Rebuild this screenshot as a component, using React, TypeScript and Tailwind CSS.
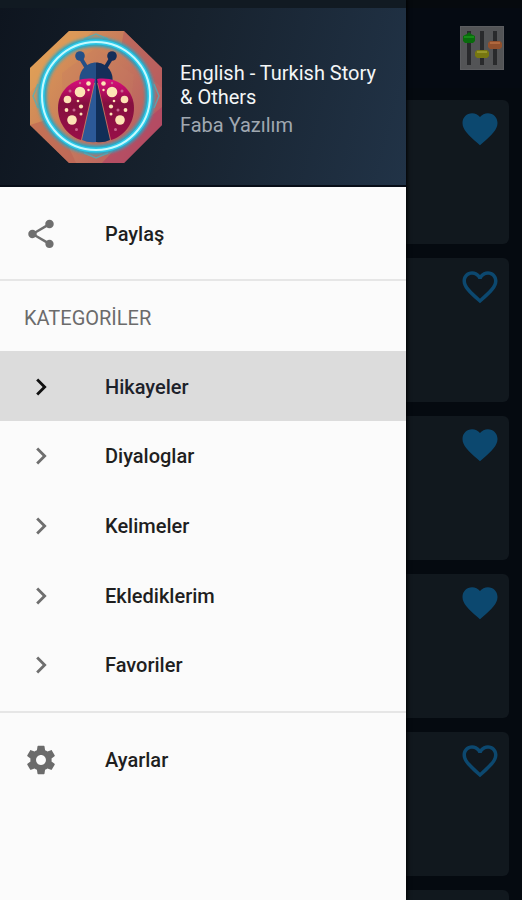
import type { ReactNode } from "react";

const HEART =
  "M12 21.35l-1.45-1.32C5.4 15.36 2 12.28 2 8.5 2 5.42 4.42 3 7.5 3c1.74 0 3.41.81 4.5 2.09C13.09 3.81 14.76 3 16.5 3 19.58 3 22 5.42 22 8.5c0 3.78-3.4 6.86-8.55 11.54L12 21.35z";
const HEART_OUTLINE =
  "M16.5 3c-1.74 0-3.41.81-4.5 2.09C10.91 3.81 9.24 3 7.5 3 4.42 3 2 5.42 2 8.5c0 3.78 3.4 6.86 8.55 11.54L12 21.35l1.45-1.32C18.6 15.36 22 12.28 22 8.5 22 5.42 19.58 3 16.5 3zm-4.4 15.55l-.1.1-.1-.1C7.14 14.24 4 11.39 4 8.5 4 6.5 5.5 5 7.5 5c1.54 0 3.04.99 3.57 2.36h1.87C13.46 5.99 14.96 5 16.5 5c2 0 3.5 1.5 3.5 3.5 0 2.89-3.14 5.74-7.9 10.05z";
const SHARE =
  "M18 16.08c-.76 0-1.44.3-1.96.77L8.91 12.7c.05-.23.09-.46.09-.7s-.04-.47-.09-.7l7.05-4.11c.54.5 1.25.81 2.04.81 1.66 0 3-1.34 3-3s-1.34-3-3-3-3 1.34-3 3c0 .24.04.47.09.7L8.04 9.81C7.5 9.31 6.79 9 6 9c-1.66 0-3 1.34-3 3s1.34 3 3 3c.79 0 1.5-.31 2.04-.81l7.12 4.16c-.05.21-.08.43-.08.65 0 1.61 1.31 2.92 2.92 2.92s2.92-1.31 2.92-2.92-1.31-2.92-2.92-2.92z";
const CHEVRON = "M10 6L8.59 7.41 13.17 12l-4.58 4.59L10 18l6-6z";
const GEAR =
  "M19.43 12.98c.04-.32.07-.64.07-.98s-.03-.66-.07-.98l2.11-1.65c.19-.15.24-.42.12-.64l-2-3.46c-.12-.22-.39-.3-.61-.22l-2.49 1c-.52-.4-1.08-.73-1.69-.98l-.38-2.65C14.46 2.18 14.25 2 14 2h-4c-.25 0-.46.18-.49.42l-.38 2.65c-.61.25-1.17.59-1.69.98l-2.49-1c-.23-.09-.49 0-.61.22l-2 3.46c-.13.22-.07.49.12.64l2.11 1.65c-.04.32-.07.65-.07.98s.03.66.07.98l-2.11 1.65c-.19.15-.24.42-.12.64l2 3.46c.12.22.39.3.61.22l2.49-1c.52.4 1.08.73 1.69.98l.38 2.65c.03.24.24.42.49.42h4c.25 0 .46-.18.49-.42l.38-2.65c.61-.25 1.17-.59 1.69-.98l2.49 1c.23.09.49 0 .61-.22l2-3.46c.12-.22.07-.49-.12-.64l-2.11-1.65zM12 15.5c-1.93 0-3.5-1.57-3.5-3.5s1.57-3.5 3.5-3.5 3.5 1.57 3.5 3.5-1.57 3.5-3.5 3.5z";

const categories = ["Hikayeler", "Diyaloglar", "Kelimeler", "Eklediklerim", "Favoriler"];
const stories = [true, false, true, true, false, true];

function Glyph({ path, className }: { path: string; className: string }) {
  return (
    <svg viewBox="0 0 24 24" fill="currentColor" aria-hidden="true" className={className}>
      <path d={path} />
    </svg>
  );
}

function Spots() {
  return (
    <g fill="#fde3b5">
      <circle cx="54" cy="53" r="5.3" />
      <circle cx="41.500" cy="60.500" r="3.800" />
      <circle cx="46" cy="81" r="4.800" />
      <circle cx="62.500" cy="44.500" r="2.300" />
      <circle cx="55" cy="67.500" r="2.100" />
      <circle cx="40.500" cy="71" r="1.900" />
      <circle cx="55" cy="75" r="1.500" />
      <circle cx="52" cy="62" r="1.300" />
      <circle cx="62.500" cy="51" r="1.200" />
      <g fill="#c8668c">
        <circle cx="44" cy="52" r="1.500" />
        <circle cx="50.500" cy="90.500" r="1.500" />
        <circle cx="48" cy="71" r="1.500" />
        <circle cx="54" cy="44" r="1.200" />
      </g>
    </g>
  );
}

function LadybugLogo() {
  return (
    <svg viewBox="4 6 132 132" role="img" aria-label="Faba" className="size-33 shrink-0">
      <defs>
        <linearGradient id="plate" x1="0" y1="0.2" x2="1" y2="0.8">
          <stop offset="0" stopColor="#dc9a55" />
          <stop offset="0.5" stopColor="#c67a5c" />
          <stop offset="1" stopColor="#b65664" />
        </linearGradient>
        <linearGradient id="wing" x1="0" y1="0" x2="0" y2="1">
          <stop offset="0" stopColor="#d90f7d" />
          <stop offset="0.2" stopColor="#b80d62" />
          <stop offset="0.4" stopColor="#85103f" />
          <stop offset="1" stopColor="#980f48" />
        </linearGradient>
        <filter id="glow" x="-20%" y="-20%" width="140%" height="140%">
          <feGaussianBlur stdDeviation="1.500" />
        </filter>
      </defs>
      <path d="M43 6h55l38 37v57l-38 38H43L4 100V43z" fill="url(#plate)" />
      <path d="M98 6l38 37v20L94 28z" fill="#b75a5c" opacity=".55" />
      <path d="M43 6L4 43v24l43-42 20-19z" fill="#e6a75b" opacity=".4" />
      <path d="M136 82v18l-38 38H76l26-28z" fill="#b14164" opacity=".6" />
      <path d="M4 100l39 38h7L38 112 20 95z" fill="#bd6253" opacity=".6" />
      <path d="M36 48l34-25 38 27-6 56-64 8z" fill="#c77b5f" opacity=".3" />
      <g fill="none" stroke="#45b5c3" strokeWidth="1.500" opacity=".7">
        <path d="M58 14l12-5 12 5M58 128l12 5 12-5M12 59l-5 12 5 12M128 59l5 12-5 12" />
      </g>
      <circle cx="70" cy="71" r="54" fill="none" stroke="#20a9c9" strokeWidth="9" filter="url(#glow)" />
      <circle cx="70" cy="71" r="54" fill="none" stroke="#2ec9e8" strokeWidth="5" />
      <circle cx="70" cy="71" r="54" fill="none" stroke="#c4faff" strokeWidth="2" />
      <g transform="translate(0 14)">
        <path d="M54 18l8 13" stroke="#244f87" strokeWidth="4" />
        <path d="M86 18l-8 13" stroke="#152e59" strokeWidth="4" />
        <circle cx="54" cy="17" r="4.800" fill="#244f87" />
        <circle cx="86" cy="17" r="4.800" fill="#152e59" />
        <path d="M53.500 42c-1-10 7-18.500 16.500-18.500V44z" fill="#244f87" />
        <path d="M86.500 42c1-10-7-18.500-16.500-18.500V44z" fill="#152e59" />
        <path d="M70 39L56 101q6 3 14 2z" fill="#2c5998" />
        <path d="M70 39l14 62q-6 3-14 2z" fill="#102e57" />
        <g>
          <path d="M69 40C48 37 32 51 32 69c0 16 10 28 23 32z" fill="url(#wing)" />
          <Spots />
        </g>
        <g transform="translate(140 0) scale(-1 1)">
          <path d="M69 40C48 37 32 51 32 69c0 16 10 28 23 32z" fill="url(#wing)" />
          <Spots />
        </g>
      </g>
    </svg>
  );
}

function MixerIcon() {
  return (
    <svg viewBox="0 0 44 44" aria-hidden="true" className="size-11">
      <rect width="44" height="44" fill="#5c5d60" />
      <rect x="1" y="1" width="42" height="42" fill="#535456" />
      <g fill="#292a2c">
        <rect x="7" y="5" width="4" height="34" />
        <rect x="20" y="5" width="4" height="34" />
        <rect x="33" y="5" width="4" height="34" />
      </g>
      <path d="M7 8l2-2 2 2 4 2v5l-2 2H5l-2-2v-5z" fill="#096b0c" />
      <path d="M4 10h10v2H4z" fill="#168a17" />
      <path d="M17 24h10l2 2v4l-2 2H17l-2-2v-4z" fill="#777711" />
      <path d="M17 25h10v2H17z" fill="#969629" />
      <path d="M30 15h10l2 2v4l-2 2H30l-2-2v-4z" fill="#91502d" />
      <path d="M30 16h10v2H30z" fill="#b0683e" />
    </svg>
  );
}

function MenuItem({ icon, label, active = false }: { icon: ReactNode; label: string; active?: boolean }) {
  return (
    <button
      type="button"
      aria-current={active ? "page" : undefined}
      className={
        active
          ? "flex w-full flex-1 items-center gap-[47px] bg-[#dcdcdc] px-6 pt-0.5 text-left text-xl font-medium text-[#1d222b]"
          : "flex w-full flex-1 items-center gap-[47px] px-6 pt-0.5 text-left text-xl font-medium text-[#1f1f1f]"
      }
    >
      {icon}
      {label}
    </button>
  );
}

export default function App() {
  return (
    <div className="relative h-screen overflow-hidden bg-[#050a10] font-['Roboto','Noto_Sans',sans-serif]">
      <div className="h-2 bg-[#060a0e]" />
      <header className="flex h-20 items-center justify-end bg-[#050a12] pr-[18px]">
        <button type="button" aria-label="Filtrele">
          <MixerIcon />
        </button>
      </header>
      <main className="flex flex-col gap-3.5 px-[13px] pt-3">
        {stories.map((liked, i) => (
          <article key={i} className="flex h-36 shrink-0 items-start justify-end rounded-md bg-[#11181e] px-2 py-2">
            <button type="button" aria-label="Favori" className="text-[#0c486f]">
              <Glyph path={liked ? HEART : HEART_OUTLINE} className="size-[42px]" />
            </button>
          </article>
        ))}
      </main>

      <aside className="absolute inset-y-0 left-0 w-[78%] max-w-[406px] bg-[#fbfbfb] shadow-[0_0_4px_1px_#000000]">
        <div className="h-2 bg-[#111a22]" />
        <div className="flex h-[179px] items-center gap-[18px] border-b-2 border-[#070d17] bg-[linear-gradient(105deg,#0e151f_0%,#17222e_45%,#213347_100%)] pr-5 pl-[30px]">
          <LadybugLogo />
          <div className="min-w-0 pt-1 text-xl leading-6">
            <h1 className="text-[#f4f6f7]">English - Turkish Story &amp; Others</h1>
            <p className="pt-1 text-[#a0a8b1]">Faba Yazılım</p>
          </div>
        </div>
        <nav>
          <div className="flex h-[94px] border-b-2 border-[#e6e6e6]">
            <MenuItem label="Paylaş" icon={<Glyph path={SHARE} className="size-[34px] text-[#6f6f6f]" />} />
          </div>
          <h2 className="flex h-[70px] items-center px-6 pt-1 text-xl text-[#6b6b6b]">KATEGORİLER</h2>
          <div className="flex h-[348px] flex-col">
            {categories.map((name, i) => (
              <MenuItem
                key={name}
                label={name}
                active={i === 0}
                icon={
                  <Glyph
                    path={CHEVRON}
                    className={i === 0 ? "size-[34px] text-[#111111]" : "size-[34px] text-[#6f6f6f]"}
                  />
                }
              />
            ))}
          </div>
          <div className="mt-3 flex h-[94px] border-t-2 border-[#e6e6e6]">
            <MenuItem label="Ayarlar" icon={<Glyph path={GEAR} className="size-[34px] text-[#6b6b6b]" />} />
          </div>
        </nav>
      </aside>
    </div>
  );
}
